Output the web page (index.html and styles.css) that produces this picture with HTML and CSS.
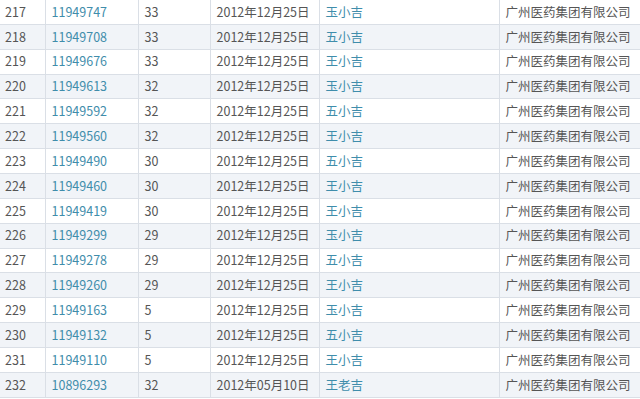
FILE: index.html
```html
<!DOCTYPE html>
<html lang="zh">
<head>
<meta charset="utf-8">
<link rel="stylesheet" href="styles.css">
</head>
<body>
<table class="tm">
<colgroup>
<col class="c1"><col class="c2"><col class="c3"><col class="c4"><col class="c5"><col class="c6">
</colgroup>
<tbody>
<tr><td>217</td><td class="lk">11949747</td><td>33</td><td>2012年12月25日</td><td class="lk">玉小吉</td><td>广州医药集团有限公司</td></tr>
<tr><td>218</td><td class="lk">11949708</td><td>33</td><td>2012年12月25日</td><td class="lk">五小吉</td><td>广州医药集团有限公司</td></tr>
<tr><td>219</td><td class="lk">11949676</td><td>33</td><td>2012年12月25日</td><td class="lk">王小吉</td><td>广州医药集团有限公司</td></tr>
<tr><td>220</td><td class="lk">11949613</td><td>32</td><td>2012年12月25日</td><td class="lk">玉小吉</td><td>广州医药集团有限公司</td></tr>
<tr><td>221</td><td class="lk">11949592</td><td>32</td><td>2012年12月25日</td><td class="lk">五小吉</td><td>广州医药集团有限公司</td></tr>
<tr><td>222</td><td class="lk">11949560</td><td>32</td><td>2012年12月25日</td><td class="lk">王小吉</td><td>广州医药集团有限公司</td></tr>
<tr><td>223</td><td class="lk">11949490</td><td>30</td><td>2012年12月25日</td><td class="lk">五小吉</td><td>广州医药集团有限公司</td></tr>
<tr><td>224</td><td class="lk">11949460</td><td>30</td><td>2012年12月25日</td><td class="lk">王小吉</td><td>广州医药集团有限公司</td></tr>
<tr><td>225</td><td class="lk">11949419</td><td>30</td><td>2012年12月25日</td><td class="lk">王小吉</td><td>广州医药集团有限公司</td></tr>
<tr><td>226</td><td class="lk">11949299</td><td>29</td><td>2012年12月25日</td><td class="lk">玉小吉</td><td>广州医药集团有限公司</td></tr>
<tr><td>227</td><td class="lk">11949278</td><td>29</td><td>2012年12月25日</td><td class="lk">五小吉</td><td>广州医药集团有限公司</td></tr>
<tr><td>228</td><td class="lk">11949260</td><td>29</td><td>2012年12月25日</td><td class="lk">王小吉</td><td>广州医药集团有限公司</td></tr>
<tr><td>229</td><td class="lk">11949163</td><td>5</td><td>2012年12月25日</td><td class="lk">玉小吉</td><td>广州医药集团有限公司</td></tr>
<tr><td>230</td><td class="lk">11949132</td><td>5</td><td>2012年12月25日</td><td class="lk">五小吉</td><td>广州医药集团有限公司</td></tr>
<tr><td>231</td><td class="lk">11949110</td><td>5</td><td>2012年12月25日</td><td class="lk">王小吉</td><td>广州医药集团有限公司</td></tr>
<tr><td>232</td><td class="lk">10896293</td><td>32</td><td>2012年05月10日</td><td class="lk">王老吉</td><td>广州医药集团有限公司</td></tr>
</tbody>
</table>
</body>
</html>
```
FILE: styles.css
```css
html, body {
  margin: 0;
  padding: 0;
  background: #ffffff;
  overflow: hidden;
}
.tm {
  border-collapse: collapse;
  table-layout: fixed;
  width: 660px;
  margin-top: -1px;
  font-family: "Noto Sans CJK SC", "Noto Sans", sans-serif;
  font-size: 12.5px;
  font-weight: 400;
  color: #555555;
}
.c1 { width: 45px; }
.c2 { width: 93px; }
.c3 { width: 72px; }
.c4 { width: 109px; }
.c5 { width: 180px; }
.c6 { width: 161px; }
.tm td {
  height: 23.87px;
  padding: 0 0 0 6px;
  border: 1px solid #dadfe6;
  white-space: nowrap;
  vertical-align: middle;
  line-height: 1;
}
.tm td:first-child {
  padding-left: 5px;
  border-left: none;
}
.tm tr:nth-child(even) td {
  background: #f1f4f8;
}
.tm td.lk {
  color: #3f8dab;
}
```
